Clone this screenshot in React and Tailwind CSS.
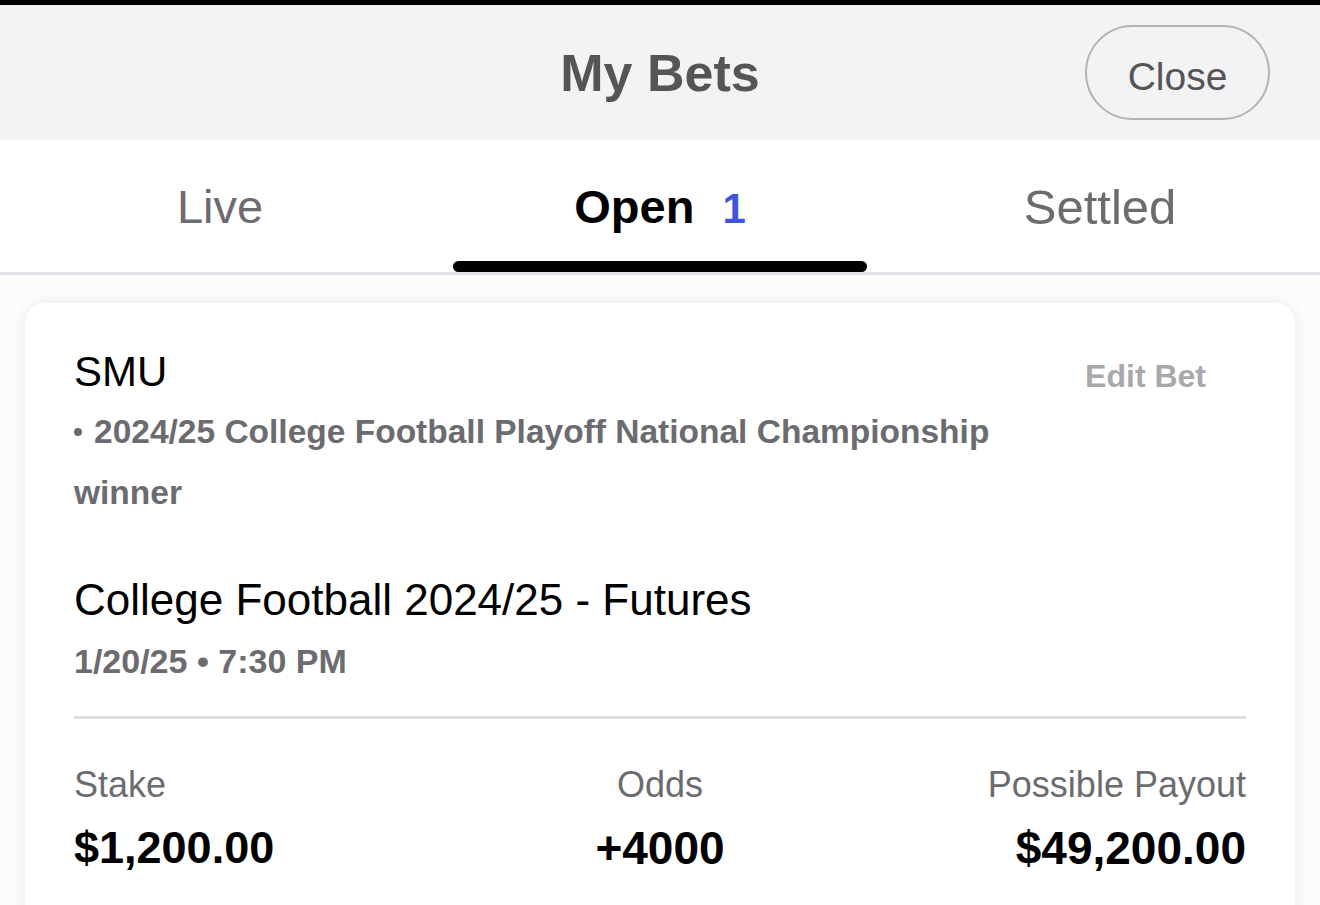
export default function App() {
  const font = { fontFamily: '"Liberation Sans", Arial, sans-serif' };
  return (
    <div className="w-[1320px] h-[905px] overflow-hidden bg-white" style={font}>
      <div className="h-[5px] bg-black" />
      <div className="h-[135px] bg-[#f3f3f5] grid grid-cols-[1fr_auto_1fr] items-center">
        <div />
        <div className="text-[52px] leading-none font-bold text-[#555558]">My Bets</div>
        <div className="flex justify-end pr-[50px]">
          <button className="w-[185px] h-[95px] rounded-full border-2 border-[#b4b4b6] text-[39px] text-[#555558] flex items-center justify-center pt-[9px]">
            Close
          </button>
        </div>
      </div>
      <div className="h-[132px] grid grid-cols-3 bg-white">
        <div className="flex flex-col items-center">
          <div className="mt-[43px] text-[47px] leading-[48px] text-[#6b6b70]">Live</div>
        </div>
        <div className="flex flex-col items-center">
          <div className="mt-[43px] text-[47px] leading-[48px] font-bold text-black flex items-baseline">
            Open<span className="ml-[28px] text-[#3f55e0] text-[42px]">1</span>
          </div>
          <div className="mt-auto w-[414px] h-[11px] rounded-full bg-black" />
        </div>
        <div className="flex flex-col items-center">
          <div className="mt-[43px] text-[49px] leading-[48px] text-[#6b6b70]">Settled</div>
        </div>
      </div>
      <div className="h-[3px] bg-[#e1e1e7]" />
      <div className="px-[25px] pt-[28px] bg-[#fcfcfc]">
        <div className="bg-white rounded-[20px] shadow-[0_0_14px_rgba(0,0,0,0.08)] px-[49px] pt-[44px] pb-[60px]">
          <div className="flex items-start justify-between">
            <div className="text-[42px] leading-[50px] text-black">SMU</div>
            <div className="mr-[40px] mt-[4px] text-[32px] leading-[50px] font-bold text-[#a9a9ad]">Edit Bet</div>
          </div>
          <div className="w-[960px] text-[33.5px] leading-[61px] font-bold text-[#6b6b70]">
            <span className="inline-block w-[8px] h-[8px] rounded-full bg-[#6b6b70] mr-[12px] mb-[5px] align-middle" />
            2024/25 College Football Playoff National Championship winner
          </div>
          <div className="mt-[50px] text-[44px] leading-[54px] text-black">College Football 2024/25 - Futures</div>
          <div className="mt-[12px] text-[34px] leading-[44px] font-bold text-[#6b6b70]">1/20/25 • 7:30 PM</div>
          <div className="mt-[33px] h-[3px] bg-[#dfdfe6]" />
          <div className="mt-[44px] grid grid-cols-3">
            <div className="flex flex-col items-start">
              <div className="text-[36px] leading-[44px] text-[#6b6b70]">Stake</div>
              <div className="mt-[14px] text-[45px] leading-[54px] font-bold text-black">$1,200.00</div>
            </div>
            <div className="flex flex-col items-center">
              <div className="text-[36px] leading-[44px] text-[#6b6b70]">Odds</div>
              <div className="mt-[14px] text-[46px] leading-[54px] font-bold text-black">+4000</div>
            </div>
            <div className="flex flex-col items-end">
              <div className="text-[36px] leading-[44px] text-[#6b6b70]">Possible Payout</div>
              <div className="mt-[14px] text-[46px] leading-[54px] font-bold text-black">$49,200.00</div>
            </div>
          </div>
        </div>
      </div>
    </div>
  );
}
